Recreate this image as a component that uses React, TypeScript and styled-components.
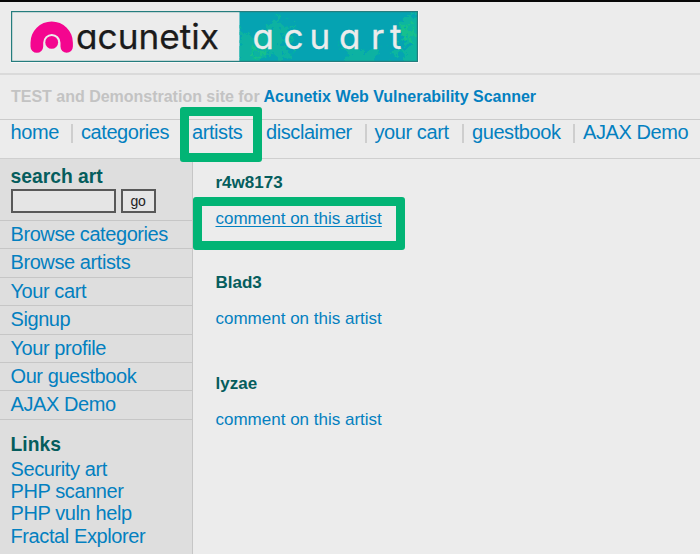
import React from 'react';
import styled, { createGlobalStyle } from 'styled-components';

const Global = createGlobalStyle`
  * { box-sizing: border-box; }
  body { margin: 0; background: #ececec; overflow: hidden; font-family: "Liberation Sans", Arial, sans-serif; }
  a { color: #0380c0; text-decoration: none; }
`;

const Page = styled.div`
  position: relative;
  width: 700px;
  height: 554px;
  overflow: hidden;
  display: flex;
  flex-direction: column;
  background: #ececec;
  border-top: 2px solid #080808;
`;

const Masthead = styled.header`
  height: 73px;
  flex: none;
  padding: 9px 0 0 11px;
  border-bottom: 2px solid #dadada;
`;

const Logo = styled.svg`
  display: block;
`;

const Tagline = styled.div`
  height: 45px;
  flex: none;
  padding-left: 11px;
  font-size: 16px;
  letter-spacing: -0.01px;
  line-height: 43px;
  font-weight: bold;
  color: #c3c3c3;
  border-bottom: 1px solid #cbcbcb;
  white-space: nowrap;
`;

const Nav = styled.nav`
  height: 39px;
  flex: none;
  display: flex;
  align-items: flex-start;
  padding: 4px 0 0 10.5px;
  border-bottom: 1px solid #cfcfcf;
`;

const NavLink = styled.a<{ $width: number }>`
  flex: none;
  width: ${p => p.$width}px;
  height: 19px;
  font-size: 20px;
  letter-spacing: -0.42px;
  line-height: 16px;
  white-space: nowrap;
  &:not(:first-child) {
    border-left: 2px solid #cecece;
    padding-left: 8px;
  }
`;

const Main = styled.div`
  flex: 1;
  display: flex;
`;

const Sidebar = styled.aside`
  width: 193px;
  background: #dedede;
  border-right: 1px solid #c6c6c6;
`;

const Search = styled.form`
  height: 61px;
  padding: 6px 0 0 10.5px;
`;

const SideTitle = styled.h2`
  margin: 0;
  font-size: 19.3px;
  line-height: 24px;
  color: #055d5d;
`;

const SearchRow = styled.div`
  display: flex;
  gap: 5px;
`;

const Field = styled.input`
  width: 105px;
  height: 24px;
  border: 2px solid #585858;
  border-radius: 0;
  background: #e5e5e5;
  outline: none;
`;

const Go = styled.button`
  width: 35px;
  height: 24px;
  padding: 0;
  border: 2px solid #585858;
  background: #e5e5e5;
  color: #222;
  font: 14px "Liberation Sans", Arial, sans-serif;
  letter-spacing: -0.3px;
`;

const Menu = styled.div`
  display: flex;
  flex-direction: column;
`;

const MenuLink = styled.a`
  height: 28.4px;
  padding-left: 10.5px;
  font-size: 20px;
  letter-spacing: -0.42px;
  line-height: 27.4px;
  border-top: 1px solid #c6c6c6;
`;

const Links = styled.div`
  display: flex;
  flex-direction: column;
  padding: 13px 0 0 10.5px;
  border-top: 1px solid #c6c6c6;
`;

const SmallLinks = styled.div`
  display: flex;
  flex-direction: column;
  padding-top: 1px;
`;

const SmallLink = styled.a`
  font-size: 20px;
  letter-spacing: -0.4px;
  line-height: 22.3px;
`;

const Content = styled.main`
  flex: 1;
  padding: 14px 0 0 22.5px;
`;

const Artist = styled.section`
  height: 100.3px;
`;

const Name = styled.h3`
  margin: 0 0 16px;
  font-size: 17px;
  line-height: 20px;
  color: #055d5d;
`;

const Comment = styled.a<{ $active: boolean }>`
  display: block;
  font-size: 17px;
  line-height: 20px;
  text-decoration: ${p => (p.$active ? 'underline' : 'none')};
  text-decoration-thickness: 1px;
  text-underline-offset: 2px;
`;

const Highlight = styled.div<{ $x: number; $y: number; $w: number; $h: number }>`
  position: absolute;
  left: ${p => p.$x}px;
  top: ${p => p.$y}px;
  width: ${p => p.$w}px;
  height: ${p => p.$h}px;
  border: 9px solid #02b475;
  border-radius: 3px;
  pointer-events: none;
`;

const Wordmark = styled.text`
  font-family: Inter, sans-serif;
  font-feature-settings: "cv11";
  font-size: 35px;
`;

const nav: [string, number][] = [
  ['home', 60.5], ['categories', 111], ['artists', 74], ['disclaimer', 108.5],
  ['your cart', 97.5], ['guestbook', 111], ['AJAX Demo', 120],
];
const menu = ['Browse categories', 'Browse artists', 'Your cart', 'Signup', 'Your profile', 'Our guestbook', 'AJAX Demo'];
const links = ['Security art', 'PHP scanner', 'PHP vuln help', 'Fractal Explorer'];
const artists = ['r4w8173', 'Blad3', 'lyzae'];

function Banner() {
  return (
    <Logo width="408" height="52" viewBox="11 11 408 52">
      <defs>
        <clipPath id="teal"><rect x="239.5" y="12" width="178" height="49" /></clipPath>
        <filter id="fractal" x="-20%" y="-20%" width="140%" height="140%">
          <feTurbulence type="fractalNoise" baseFrequency="0.14" numOctaves="3" seed="8" result="n" />
          <feDisplacementMap in="SourceGraphic" in2="n" scale="22" xChannelSelector="R" yChannelSelector="G" />
          <feGaussianBlur stdDeviation="0.7" />
        </filter>
      </defs>
      <rect x="11" y="11" width="408" height="52" fill="#f8f8f8" />
      <rect x="12" y="12" width="405" height="49" fill="#ececec" />
      <rect x="239.5" y="12" width="178" height="49" fill="#05a3b2" />
      <g clipPath="url(#teal)">
        <g filter="url(#fractal)" fill="#08b5a0">
          <path d="M240 30 L254 35 L269 29 L276 14 L282 28 L298 20 L286 34 L295 41 L281 45 L293 54 L280 66 L270 53 L256 66 L236 64Z" opacity=".85" />
          <path d="M340 44 L352 50 L361 46 L367 53 L380 43 L375 56 L386 66 L338 66 L348 57Z" opacity=".85" />
          <path d="M426 10 L406 17 L400 29 L412 33 L398 40 L409 45 L392 52 L406 56 L400 66 L426 66Z" />
          <path d="M253 52 L264 47 L260 60Z M404 25 L416 28 L410 48Z" fill="#12c08e" />
        </g>
      </g>
      <rect x="11.6" y="11.6" width="405.8" height="49.8" fill="none" stroke="#257d7e" strokeWidth="1.2" />
      <path d="M30.5 42.7 A21.2 21.2 0 0 1 72.9 42.7 V46.5 A6.2 6.2 0 0 1 60.5 46.5 V42.7 A8.3 8.3 0 0 0 43.2 42.7 V46.5 A6.2 6.2 0 0 1 30.5 46.5 Z" fill="#f4058f" />
      <circle cx="51.7" cy="42.4" r="6.4" fill="#f4058f" />
      <Wordmark x="76" y="48.5" textLength="143" lengthAdjust="spacingAndGlyphs" fill="#1b1b1b" stroke="#1b1b1b" strokeWidth=".25">acunetix</Wordmark>
      <Wordmark x="252.5 283.5 309.5 339 371 390" y="48.5" fill="#ececec" stroke="#ececec" strokeWidth=".3">acuart</Wordmark>
    </Logo>
  );
}

export default function App() {
  return (
    <>
      <Global />
      <Page>
        <Masthead><Banner /></Masthead>
        <Tagline>TEST and Demonstration site for <a href="#">Acunetix Web Vulnerability Scanner</a></Tagline>
        <Nav>
          {nav.map(([label, width]) => <NavLink key={label} href="#" $width={width}>{label}</NavLink>)}
        </Nav>
        <Main>
          <Sidebar>
            <Search>
              <SideTitle>search art</SideTitle>
              <SearchRow><Field aria-label="search" /><Go type="button">go</Go></SearchRow>
            </Search>
            <Menu>{menu.map(m => <MenuLink key={m} href="#">{m}</MenuLink>)}</Menu>
            <Links>
              <SideTitle>Links</SideTitle>
              <SmallLinks>{links.map(l => <SmallLink key={l} href="#">{l}</SmallLink>)}</SmallLinks>
            </Links>
          </Sidebar>
          <Content>
            {artists.map((a, i) => (
              <Artist key={a}>
                <Name>{a}</Name>
                <Comment href="#" $active={i === 0}>comment on this artist</Comment>
              </Artist>
            ))}
          </Content>
        </Main>
        <Highlight $x={180} $y={105} $w={82} $h={55} />
        <Highlight $x={193} $y={195} $w={212} $h={53} />
      </Page>
    </>
  );
}
